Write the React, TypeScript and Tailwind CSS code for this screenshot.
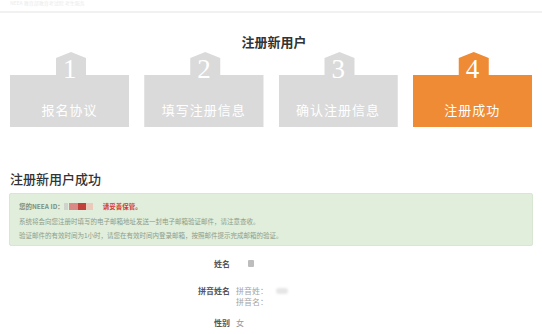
const STEPS = [
  { n: "1", label: "报名协议", active: false },
  { n: "2", label: "填写注册信息", active: false },
  { n: "3", label: "确认注册信息", active: false },
  { n: "4", label: "注册成功", active: true },
];

const CJK = "font-['Noto_Sans_CJK_SC',sans-serif]";

function Step({ n, label, active }: { n: string; label: string; active: boolean }) {
  return (
    <div
      className={
        "flex h-[75px] w-[121px] flex-col items-center text-white [clip-path:polygon(46px_6px,61px_0,76px_6px,76px_23px,100%_23px,100%_100%,0_100%,0_23px,46px_23px)] " +
        (active ? "bg-[#ef8a35]" : "bg-[#dadada]")
      }
    >
      <span className="pt-[4px] font-['Liberation_Serif',serif] text-[27px] leading-none">{n}</span>
      <span className={`mt-[19px] text-[13px] font-normal leading-[16px] tracking-[1px] ${CJK}`}>
        {label}
      </span>
    </div>
  );
}

export default function App() {
  return (
    <div className={`h-[334px] w-[542px] overflow-hidden bg-white ${CJK}`}>
      <div className="h-[13px] overflow-hidden border-b-2 border-[#f1f1f1] pl-[10px]">
        <p className="text-[5px] leading-[6px] text-[#ececec]">NEEA 教育部教育考试院 考生服务</p>
      </div>

      <h1 className="mt-[21px] pl-[6px] text-center text-[13px] font-bold leading-[16px] text-[#333]">
        注册新用户
      </h1>

      <div className="mt-[2px] flex gap-[15px] px-[10px]">
        {STEPS.map((s) => (
          <Step key={s.n} {...s} />
        ))}
      </div>

      <h2 className="mt-[44px] pl-[10px] text-[13px] font-medium leading-[16px] text-[#333]">
        注册新用户成功
      </h2>

      <div className="mx-[9px] mt-[6px] h-[53px] rounded-[2px] border border-[#d7e7d2] bg-[#e0eedb] pl-[9px] pt-[5px] text-[6.5px] leading-[14.5px] text-[#8d9c8b]">
        <p className="flex items-center">
          <span className="font-bold text-[#7f8f7d]">您的NEEA ID：</span>
          <span className="h-[7px] w-[4px] bg-[#cfd3cc]" />
          <span className="ml-[1px] h-[7px] w-[9px] bg-[#d98a86]" />
          <span className="h-[7px] w-[8px] bg-[#c0403c]" />
          <span className="h-[7px] w-[7px] bg-[#ebc9bb]" />
          <span className="ml-[10px] font-bold text-[#d23c34]">请妥善保管。</span>
        </p>
        <p>系统将会向您注册时填写的电子邮箱地址发送一封电子邮箱验证邮件，请注意查收。</p>
        <p>验证邮件的有效时间为1小时，请您在有效时间内登录邮箱，按照邮件提示完成邮箱的验证。</p>
      </div>

      <div className="mt-[12px] text-[8px] leading-[11px]">
        <div className="flex gap-[6px]">
          <span className="w-[230px] text-right font-bold text-[#555]">姓名</span>
          <span className="ml-[12px] mt-[2px] h-[7px] w-[6px] rounded-[1px] bg-[#bdbdbd] blur-[0.5px]" />
        </div>
        <div className="mt-[16px] flex gap-[6px]">
          <span className="w-[230px] text-right font-bold text-[#555]">拼音姓名</span>
          <div className="flex flex-col text-[#a5a5a5]">
            <span className="flex items-center">
              拼音姓：
              <span className="ml-[8px] h-[6px] w-[12px] rounded-full bg-[#e6e6e6] blur-[1px]" />
            </span>
            <span>拼音名：</span>
          </div>
        </div>
        <div className="mt-[10px] flex gap-[6px]">
          <span className="w-[230px] text-right font-bold text-[#555]">性别</span>
          <span className="text-[#999]">女</span>
        </div>
      </div>
    </div>
  );
}
